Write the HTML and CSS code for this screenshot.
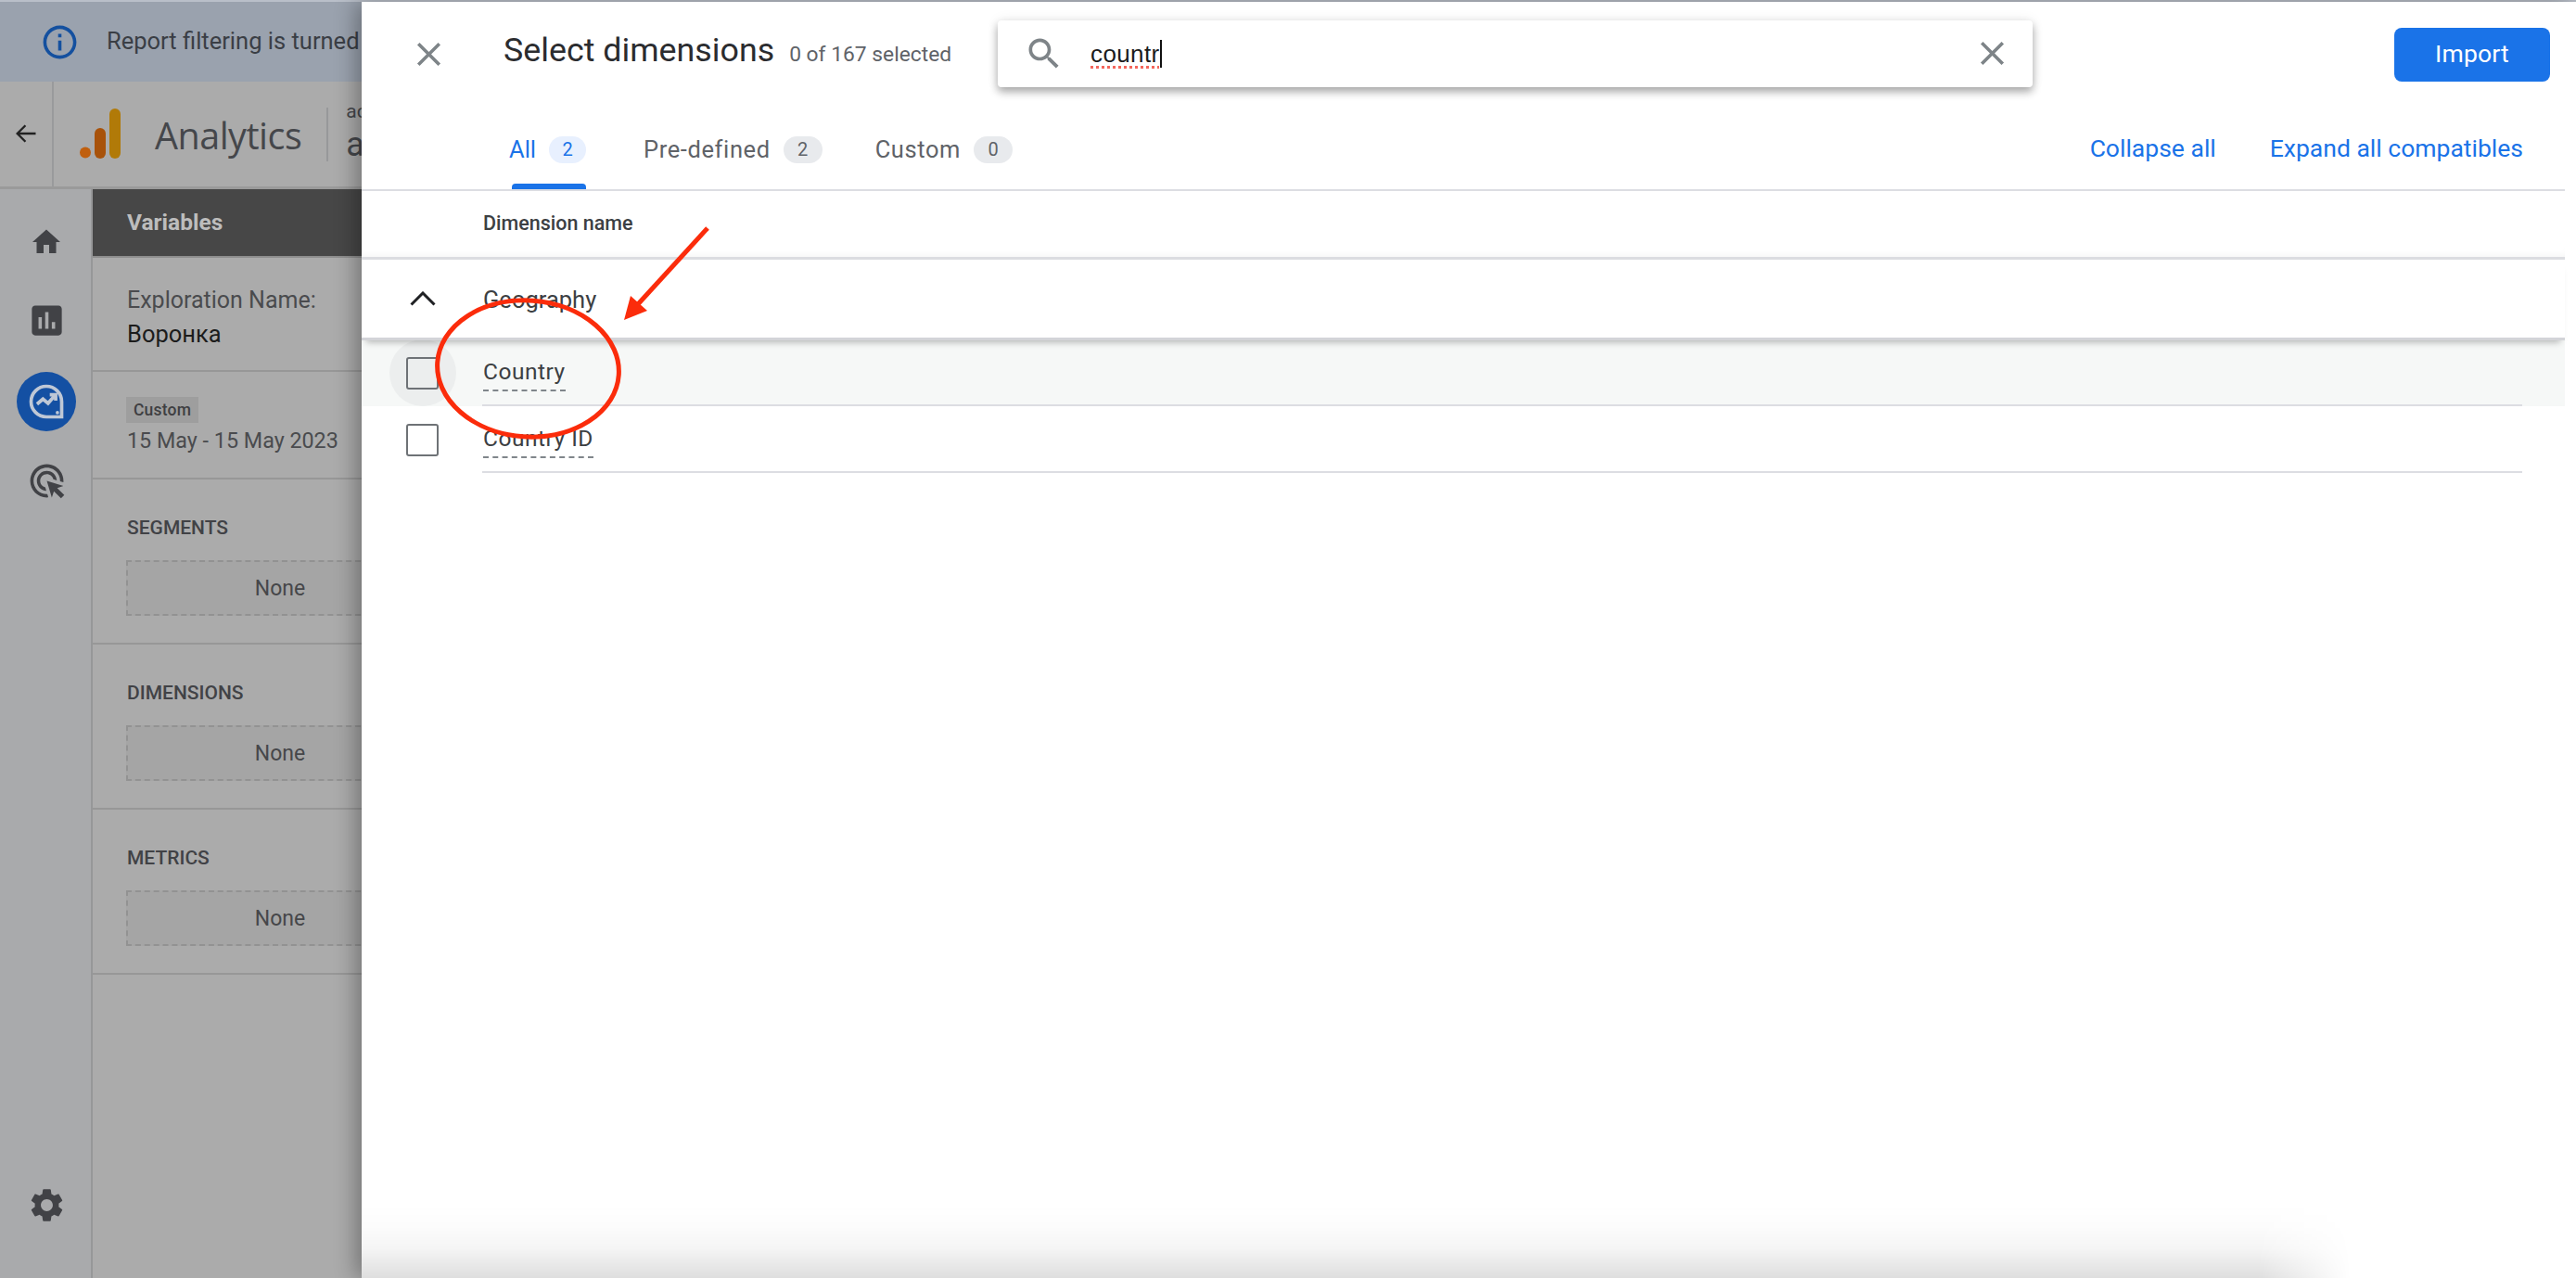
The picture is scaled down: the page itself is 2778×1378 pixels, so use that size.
FILE: index.html
```html
<!DOCTYPE html>
<html lang="en">
<head>
<meta charset="utf-8">
<title>Select dimensions</title>
<link rel="stylesheet" href="styles.css">
</head>
<body>
<div class="page">
  <div class="banner">
    <svg class="info-icon" viewBox="0 0 24 24"><path d="M11 7h2v2h-2zm0 4h2v6h-2zm1-9C6.48 2 2 6.48 2 12s4.48 10 10 10 10-4.48 10-10S17.52 2 12 2zm0 18c-4.41 0-8-3.59-8-8s3.59-8 8-8 8 3.59 8 8-3.59 8-8 8z"/></svg>
    <span class="banner-text">Report filtering is turned on for this report</span>
  </div>
  <header class="topbar">
    <div class="back">
      <svg class="back-icon" viewBox="0 0 24 24"><path d="M21 12H4M11.500 4.500 4 12l7.500 7.500"/></svg>
    </div>
    <div class="brand">
      <svg class="logo" viewBox="0 0 44 54"><circle cx="6" cy="47.500" r="6" class="logo-dot"/><rect x="16" y="21" width="12" height="33" rx="6" class="logo-mid"/><rect x="32" y="0" width="12" height="54" rx="6" class="logo-tall"/></svg>
      <span class="brand-name">Analytics</span>
      <span class="brand-sep"></span>
      <div class="account">
        <span class="account-small">account name</span>
        <span class="account-big">account</span>
      </div>
    </div>
  </header>
  <div class="workspace">
    <nav class="rail">
      <div class="rail-top">
        <svg class="rail-icon home" viewBox="0 0 24 24"><path d="M10 20v-6h4v6h5v-8h3L12 3 2 12h3v8z"/></svg>
        <svg class="rail-icon" viewBox="0 0 24 24"><path d="M19 3H5c-1.100 0-2 .9-2 2v14c0 1.100.9 2 2 2h14c1.100 0 2-.9 2-2V5c0-1.100-.9-2-2-2zM9 17H7v-7h2v7zm4 0h-2V7h2v10zm4 0h-2v-4h2v4z"/></svg>
        <span class="rail-active">
          <svg class="explore" viewBox="0 0 24 24"><path class="explore-line" d="M12 3a9 9 0 1 0 0 18h9v-9a9 9 0 0 0-9-9z"/><path class="explore-line" d="M6.500 13.500 10 10.500l3 2.500 4-4.500M14 8h3.500v3.500"/><circle cx="18.500" cy="18.500" r="1" class="explore-dot"/></svg>
        </span>
        <svg class="rail-icon" viewBox="0 0 24 24"><path d="M11.710 17.990C8.530 17.840 6 15.220 6 12c0-3.310 2.690-6 6-6 3.220 0 5.840 2.530 5.990 5.710l-2.100-.63C15.480 9.310 13.890 8 12 8c-2.210 0-4 1.790-4 4 0 1.890 1.310 3.480 3.080 3.890l.63 2.100zM22 12c0 .3-.01.6-.04.9l-1.970-.59c.01-.1.01-.21.01-.31 0-4.420-3.580-8-8-8s-8 3.580-8 8 3.580 8 8 8c.1 0 .21 0 .31-.01l.59 1.970c-.3.03-.6.04-.9.04-5.520 0-10-4.480-10-10S6.480 2 12 2s10 4.480 10 10zm-3.770 4.260L22 15l-10-3 3 10 1.260-3.770 4.270 4.270 1.980-1.980-4.280-4.260z"/></svg>
      </div>
      <svg class="rail-icon gear" viewBox="0 0 24 24"><path d="M19.140 12.940c.04-.3.06-.61.06-.94 0-.32-.02-.64-.07-.94l2.030-1.580c.18-.14.23-.41.12-.61l-1.920-3.320c-.12-.22-.37-.29-.59-.22l-2.390.96c-.5-.38-1.030-.7-1.620-.94l-.36-2.540c-.04-.24-.24-.41-.48-.41h-3.840c-.24 0-.43.17-.47.41l-.36 2.540c-.59.24-1.130.57-1.620.94l-2.390-.96c-.22-.08-.47 0-.59.22L2.740 8.870c-.12.21-.08.47.12.61l2.030 1.580c-.05.3-.09.63-.09.94s.02.64.07.94l-2.030 1.580c-.18.14-.23.41-.12.61l1.920 3.320c.12.22.37.29.59.22l2.390-.96c.5.38 1.030.7 1.620.94l.36 2.540c.05.24.24.41.48.41h3.840c.24 0 .44-.17.47-.41l.36-2.540c.59-.24 1.130-.56 1.620-.94l2.390.96c.22.08.47 0 .59-.22l1.920-3.320c.12-.22.07-.47-.12-.61l-2.010-1.580zM12 15.600c-1.980 0-3.600-1.620-3.600-3.600s1.620-3.600 3.600-3.600 3.600 1.620 3.600 3.600-1.620 3.600-3.600 3.600z"/></svg>
    </nav>
    <aside class="panel">
      <div class="panel-title">Variables</div>
      <section class="sec sec-name">
        <div class="name-label">Exploration Name:</div>
        <div class="name-value">Воронка</div>
      </section>
      <section class="sec sec-date">
        <span class="chip-custom">Custom</span>
        <div class="date-value">15 May - 15 May 2023</div>
      </section>
      <section class="sec sec-var">
        <div class="var-label">SEGMENTS</div>
        <div class="none-box">None</div>
      </section>
      <section class="sec sec-var">
        <div class="var-label">DIMENSIONS</div>
        <div class="none-box">None</div>
      </section>
      <section class="sec sec-var">
        <div class="var-label">METRICS</div>
        <div class="none-box">None</div>
      </section>
    </aside>
  </div>
</div>

<div class="modal">
  <div class="m-head">
    <svg class="m-close" viewBox="0 0 24 24"><path d="M19 6.410 17.590 5 12 10.590 6.410 5 5 6.410 10.590 12 5 17.590 6.410 19 12 13.410 17.590 19 19 17.590 13.410 12z"/></svg>
    <div class="m-title-group">
      <span class="m-title">Select dimensions</span>
      <span class="m-count">0 of 167 selected</span>
    </div>
    <div class="search">
      <svg class="search-icon" viewBox="0 0 24 24"><path d="M15.500 14h-.79l-.28-.27C15.410 12.590 16 11.110 16 9.500 16 5.910 13.090 3 9.500 3S3 5.910 3 9.500 5.910 16 9.500 16c1.610 0 3.090-.59 4.230-1.570l.27.28v.79l5 4.990L20.490 19l-4.990-5zm-6 0C7.010 14 5 11.990 5 9.500S7.010 5 9.500 5 14 7.010 14 9.500 11.990 14 9.500 14z"/></svg>
      <span class="search-text"><span class="misspelled">countr</span></span>
      <svg class="search-clear" viewBox="0 0 24 24"><path d="M19 6.410 17.590 5 12 10.590 6.410 5 5 6.410 10.590 12 5 17.590 6.410 19 12 13.410 17.590 19 19 17.590 13.410 12z"/></svg>
    </div>
    <button class="import">Import</button>
  </div>
  <div class="tabs">
    <div class="tab tab-active"><span>All</span><span class="count count-active">2</span></div>
    <div class="tab"><span>Pre-defined</span><span class="count">2</span></div>
    <div class="tab"><span>Custom</span><span class="count">0</span></div>
    <div class="tab-links">
      <span>Collapse all</span>
      <span>Expand all compatibles</span>
    </div>
  </div>
  <div class="col-head">Dimension name</div>
  <div class="group">
    <svg class="chevron" viewBox="0 0 28 16"><path d="M1.500 14.500 14 2l12.500 12.500"/></svg>
    <span class="group-name">Geography</span>
  </div>
  <div class="row row-hover">
    <div class="check-cell"><span class="checkbox"></span></div>
    <div class="row-main"><span class="dim">Country</span></div>
  </div>
  <div class="row">
    <div class="check-cell"><span class="checkbox"></span></div>
    <div class="row-main"><span class="dim">Country ID</span></div>
  </div>
  <div class="m-foot-shadow"></div>
</div>

<svg class="annot" viewBox="0 0 2778 1378">
  <ellipse cx="569.500" cy="397.500" rx="98" ry="73.500" transform="rotate(4 569.500 397.500)"/>
  <path class="arrow-shaft" d="M763 246 688 328"/>
  <polygon class="arrow-head" points="673,345 680,319 698,335"/>
</svg>
</body>
</html>
```

FILE: styles.css
```css
* { box-sizing: border-box; }
html, body { margin: 0; height: 100%; overflow: hidden; }
body { font-family: Roboto, "Noto Sans", sans-serif; background: #fff; color: #3c4043; }

.page { display: flex; flex-direction: column; height: 100vh; border-top: 2px solid #b9bfc9; background: #ababab; }

.banner { flex: none; height: 86px; display: flex; align-items: center; gap: 29px; padding-left: 43px; background: #9aa2ae; white-space: nowrap; }
.info-icon { width: 43px; height: 43px; fill: #14509f; }
.banner-text { font-size: 25.500px; color: #3a3e45; margin-top: -2px; }

.topbar { flex: none; height: 116px; display: flex; border-bottom: 3px solid #9a9a9a; background: #ababab; }
.back { width: 58px; display: flex; align-items: center; justify-content: center; border-right: 2px solid #999a9c; padding-bottom: 2px; }
.back-icon { width: 28px; height: 28px; fill: none; stroke: #222; stroke-width: 2; }
.brand { display: flex; align-items: center; padding-left: 28px; white-space: nowrap; }
.logo { width: 44px; height: 54px; margin-top: -2px; }
.logo-dot { fill: #c05f0e; }
.logo-mid { fill: #a8520a; }
.logo-tall { fill: #b17a08; }
.brand-name { font-family: "Open Sans", Roboto, sans-serif; font-size: 39.500px; letter-spacing: -.5px; color: #45474b; margin-left: 37px; margin-top: 3px; }
.brand-sep { width: 2px; height: 58px; background: #97989a; margin-left: 27px; }
.account { display: flex; flex-direction: column; margin-left: 19px; margin-top: -7px; }
.account-small { font-size: 21px; color: #45474b; line-height: 30px; }
.account-big { font-size: 36px; color: #45474b; line-height: 42px; }

.workspace { flex: 1; display: flex; min-height: 0; }
.rail { flex: none; width: 100px; display: flex; flex-direction: column; justify-content: space-between; align-items: center; background: #a9aaac; border-right: 2px solid #969798; padding: 0 0 57px 2px; }
.rail-top { display: flex; flex-direction: column; align-items: center; padding-top: 39px; }
.rail-icon { width: 43px; height: 43px; fill: #414246; display: block; }
.home { width: 36px; height: 36px; margin-bottom: 45px; }
.rail-active { width: 64px; height: 64px; border-radius: 50%; background: #1450a3; display: flex; align-items: center; justify-content: center; margin: 34px 0 32px; }
.explore { width: 44px; height: 44px; }
.explore-line { fill: none; stroke: #bfc8d6; stroke-width: 2; }
.explore-dot { fill: #bfc8d6; }

.panel { flex: 1; display: flex; flex-direction: column; background: #ababab; }
.panel-title { flex: none; height: 74px; padding: 0 0 1px 37px; display: flex; align-items: center; background: #474747; border-bottom: 2px solid #8e8e8e; color: #bdbdbd; font-size: 24.500px; font-weight: 700; }
.sec { border-bottom: 2px solid #979797; padding-left: 37px; }
.sec-name { height: 123px; padding-top: 28px; }
.name-label { font-size: 25px; line-height: 36px; color: #4a4b4e; }
.name-value { font-size: 25.500px; line-height: 36px; color: #1c1c1c; }
.sec-date { height: 116px; padding-top: 26px; }
.chip-custom { display: inline-block; height: 28px; line-height: 28px; padding: 0 8px; margin-left: -1px; background: #9e9e9e; font-size: 17.500px; font-weight: 500; color: #3e3f42; letter-spacing: .2px; vertical-align: top; margin-top: 1px; }
.date-value { font-size: 23.300px; line-height: 36px; color: #4a4b4e; margin-top: 1px; }
.sec-var { height: 178px; padding-top: 37px; }
.var-label { font-size: 21px; line-height: 30px; font-weight: 500; color: #414246; }
.none-box { width: 332px; height: 60px; margin-top: 20px; margin-left: -1px; border: 2px dashed #929292; background: #a5a5a5; display: flex; align-items: center; justify-content: center; font-size: 23px; color: #46474a; }

.modal { position: absolute; left: 390px; top: 2px; right: 0; bottom: 0; background: #fff; box-shadow: -6px 0 22px rgba(0,0,0,.32); overflow: hidden; }
.m-head { height: 112px; display: flex; align-items: center; padding-left: 51px; }
.m-close { width: 43px; height: 43px; fill: #7e8488; flex: none; }
.m-title-group { width: 592px; flex: none; padding-left: 59px; display: flex; align-items: baseline; gap: 16px; white-space: nowrap; margin-top: -8px; }
.m-title { font-size: 35.800px; color: #2b2c2f; }
.m-count { font-size: 22.800px; color: #5f6368; }
.search { flex: none; width: 1116px; height: 72px; margin-top: -1px; display: flex; align-items: center; padding-left: 28px; padding-right: 22px; background: #fff; border-radius: 4px; box-shadow: 0 5px 10px rgba(0,0,0,.32), 0 0 14px rgba(0,0,0,.08); }
.search-icon { width: 44px; height: 44px; fill: #7e8488; flex: none; }
.search-text { flex: 1; padding-left: 28px; font-family: "Liberation Sans", Arial, sans-serif; font-size: 26px; letter-spacing: .4px; color: #1c1c1c; padding-top: 2px; }
.misspelled { display: inline-block; line-height: 30px; border-right: 2px solid #111; text-decoration: underline dotted #f4665c 3px; text-underline-offset: 4px; }
.search-clear { width: 43px; height: 43px; fill: #7e8488; flex: none; }
.import { margin-left: 390px; flex: none; width: 168px; height: 58px; margin-top: 1px; border: 0; border-radius: 8px; background: #1a73e8; color: #fff; font-family: Roboto, sans-serif; font-size: 26.500px; letter-spacing: .2px; padding: 0 0 3px; }

.tabs { height: 92px; margin-right: 12px; display: flex; align-items: center; gap: 57px; padding: 4px 0 0 159px; border-bottom: 2px solid #dcdde2; }
.tab { position: relative; height: 100%; display: flex; align-items: center; gap: 14px; font-size: 25.500px; letter-spacing: .6px; color: #5f6368; white-space: nowrap; }
.tab-active { color: #1a73e8; letter-spacing: 0; margin-right: 5px; }
.tab-active::after { content: ""; position: absolute; left: 3px; bottom: 0; width: 80px; height: 6px; border-radius: 4px 4px 0 0; background: #1a73e8; }
.count { min-width: 42px; height: 29px; padding: 0 14px; border-radius: 15px; background: #e8eaed; display: flex; align-items: center; justify-content: center; font-size: 20px; letter-spacing: 0; color: #5f6368; }
.count-active { background: #e8f0fe; color: #1a73e8; min-width: 40px; }
.tab-links { margin-left: auto; display: flex; gap: 58px; padding-right: 45px; margin-top: -3px; font-size: 26.500px; color: #1a73e8; white-space: nowrap; }

.col-head { height: 74px; margin-right: 12px; padding: 0 0 2px 131px; display: flex; align-items: center; font-size: 21.500px; font-weight: 500; color: #3c4043; border-bottom: 3px solid #dcdde1; box-shadow: 0 -6px 8px -6px rgba(0,0,0,.06) inset; }
.group { position: relative; z-index: 1; height: 87px; margin-right: 12px; display: flex; align-items: center; background: #fff; border-bottom: 3px solid #d3d4d8; box-shadow: 0 7px 7px -5px rgba(0,0,0,.28); }
.chevron { width: 28px; height: 16px; margin-left: 52px; fill: none; stroke: #202124; stroke-width: 3; flex: none; }
.group-name { margin-left: 51px; margin-top: 2px; font-size: 25.500px; color: #3c4043; }
.row { height: 72px; margin-right: 12px; display: flex; }
.row-hover { height: 71px; background: #f6f8f7; }
.check-cell { position: relative; flex: none; width: 130px; display: flex; align-items: center; padding-left: 48px; }
.row-hover .check-cell::before { content: ""; position: absolute; left: 30px; top: -1px; width: 72px; height: 72px; border-radius: 50%; background: #eceeee; }
.checkbox { position: relative; width: 35px; height: 35px; border: 2px solid #6e7276; border-radius: 3px; }
.row-main { flex: 1; margin-right: 46px; display: flex; align-items: center; border-bottom: 2px solid #dcdde2; padding-bottom: 3px; }
.dim { font-size: 24.500px; line-height: 30px; letter-spacing: .5px; color: #3c4043; border-bottom: 2px dashed #80868b; padding-bottom: 4px; margin-left: 1px; margin-top: 8px; }

.m-foot-shadow { position: absolute; left: 0; bottom: 0; width: 2145px; height: 80px; background: linear-gradient(to bottom, rgba(0,0,0,0) 0%, rgba(0,0,0,.012) 30%, rgba(0,0,0,.04) 60%, rgba(0,0,0,.13) 100%); -webkit-mask-image: linear-gradient(to right, #000 calc(100% - 100px), transparent); mask-image: linear-gradient(to right, #000 calc(100% - 100px), transparent); }

.annot { position: absolute; left: 0; top: 0; width: 2778px; height: 1378px; pointer-events: none; z-index: 5; }
.annot ellipse { fill: none; stroke: #fb2c0b; stroke-width: 5; }
.arrow-shaft { fill: none; stroke: #fb2c0b; stroke-width: 5; }
.arrow-head { fill: #fb2c0b; }
```
